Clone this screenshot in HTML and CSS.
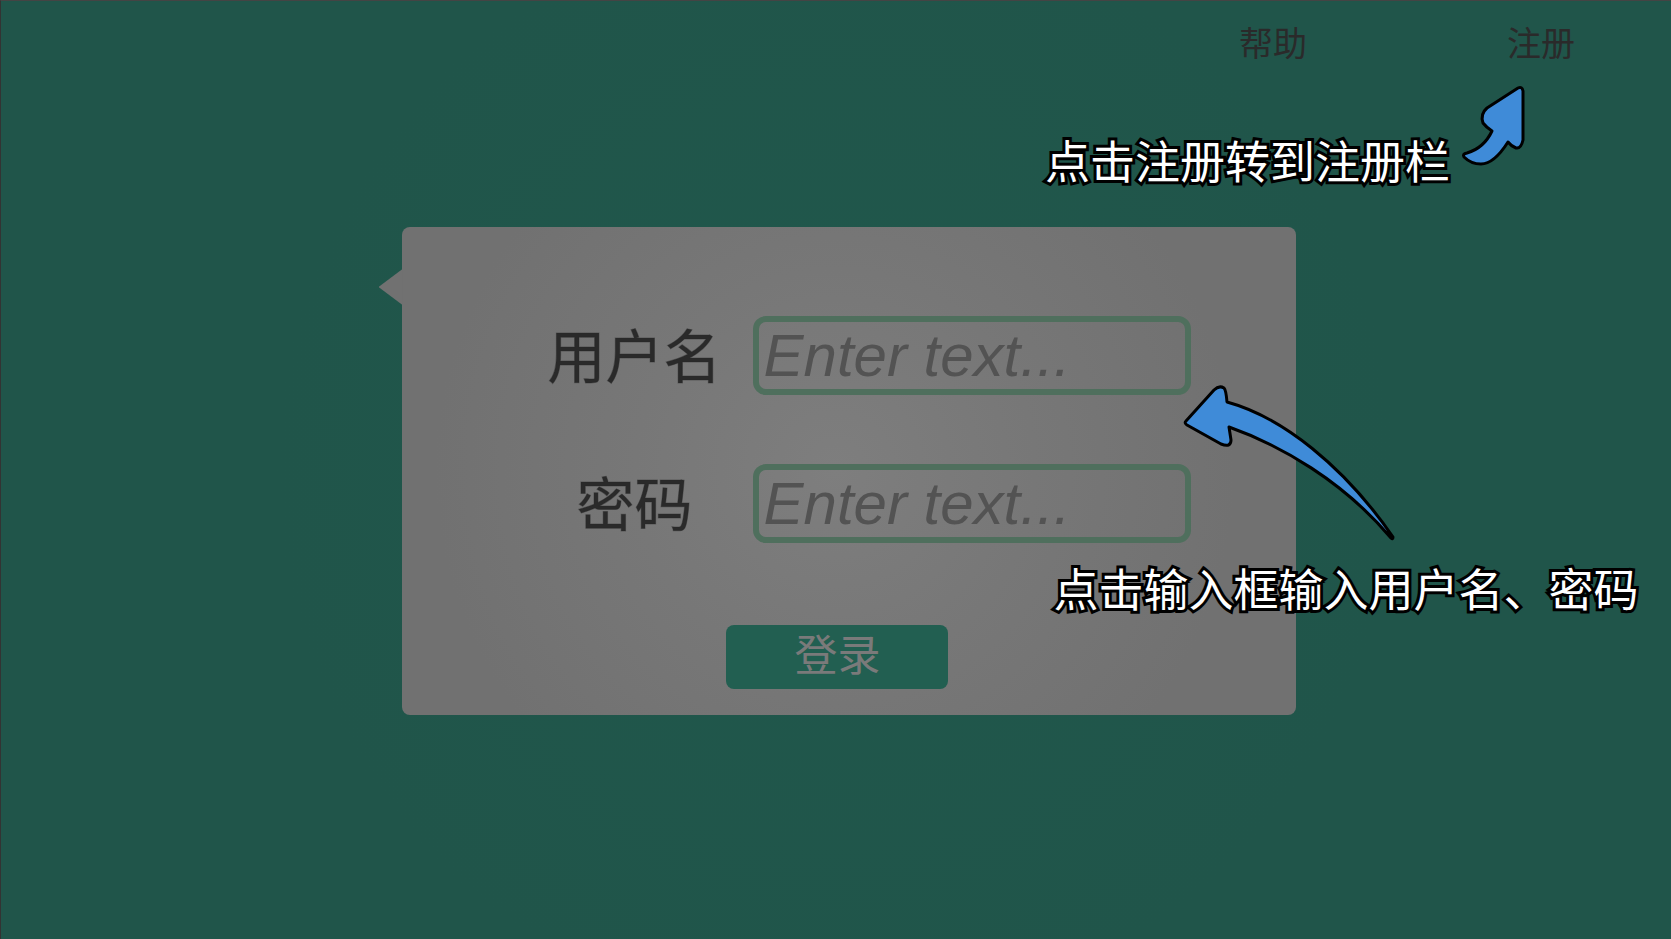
FILE: index.html
```html
<!DOCTYPE html>
<html lang="zh-CN">
<head>
<meta charset="utf-8">
<meta name="viewport" content="width=device-width, initial-scale=1">
<title>登录</title>
<link rel="stylesheet" href="styles.css">
</head>
<body>
<div class="page">
  <header class="topbar">
    <nav class="nav">
      <a class="nav-link" href="#help">帮助</a>
      <a class="nav-link" href="#register">注册</a>
    </nav>
    <div class="hint hint-register">
      <p class="hint-text">点击注册转到注册栏</p>
      <svg class="arrow-register" viewBox="0 0 64 84" width="64" height="84" aria-hidden="true">
        <path d="M2 71Q0 68 5 67Q22 62 30 45Q24 41 21 37Q18 28 25 22L56 2Q60 0 61 5V54Q59 63 54 62Q49 60 46 56Q32 78 19 78Q9 78 2 71Z"/>
      </svg>
    </div>
  </header>
  <main class="stage">
    <div class="panel">
      <form class="card">
        <div class="field">
          <label class="field-label" for="user">用户名</label>
          <input class="field-input" id="user" type="text" placeholder="Enter text...">
        </div>
        <div class="field">
          <label class="field-label" for="pass">密码</label>
          <input class="field-input" id="pass" type="password" placeholder="Enter text...">
        </div>
        <button class="submit" type="button">登录</button>
      </form>
      <div class="hint hint-input">
        <svg class="arrow-input" viewBox="0 0 216 160" width="216" height="160" aria-hidden="true">
          <path d="M3 37L31 6Q36 1 41 4Q43 6 44 18C99 33 161 82 210 153Q210 156 208 154C160 97 97 61 46 43L48 56Q48 64 38 60L4 41Q1 39 3 37Z"/>
        </svg>
        <p class="hint-text">点击输入框输入用户名、密码</p>
      </div>
    </div>
  </main>
</div>
</body>
</html>
```
FILE: styles.css
```css
* {
  box-sizing: border-box;
}

body {
  margin: 0;
  background: #20554a;
  font-family: "Noto Sans CJK SC", sans-serif;
  color: #2a2a2a;
}

.page {
  min-height: 100vh;
  border-top: 1px solid #444;
  border-left: 1px solid #333;
  background: radial-gradient(circle at 50% 50%, #20584c 0, #20554a 560px);
  overflow: hidden;
}

.topbar {
  position: relative;
  height: 226px;
  padding: 16px 96px 0;
}

.nav {
  display: flex;
  justify-content: flex-end;
  gap: 200px;
}

.nav-link {
  color: #2a2a2a;
  font-size: 34px;
  line-height: 50px;
  text-decoration: none;
}

.hint {
  position: absolute;
  z-index: 1;
  pointer-events: none;
}

.hint-text {
  margin: 0;
  color: #fff;
  font-size: 45px;
  line-height: 60px;
  white-space: nowrap;
  -webkit-text-stroke: 6px #000;
  paint-order: stroke fill;
}

.hint svg {
  display: block;
  overflow: visible;
  fill: #3f8bd8;
  stroke: #000;
  stroke-width: 3;
  stroke-linejoin: round;
}

.hint-register {
  top: 85px;
  right: 145px;
  display: flex;
  gap: 12px;
}

.hint-register .hint-text {
  margin-top: 44px;
}

.stage {
  display: flex;
  justify-content: center;
  padding: 0 0 40px 25px;
}

.panel {
  position: relative;
  width: 894px;
}

.panel::before {
  content: "";
  position: absolute;
  top: 42px;
  left: -23px;
  width: 24px;
  height: 36px;
  background: #717171;
  clip-path: polygon(100% 0, 0 50%, 100% 100%);
}

.card {
  display: flex;
  flex-direction: column;
  padding: 89px 105px 26px 132px;
  border-radius: 8px;
  background: radial-gradient(circle at 433px 243px, #7e7e7e 0, #777 200px, #717171 400px);
}

.field {
  display: flex;
  align-items: flex-start;
  justify-content: space-between;
  margin-bottom: 69px;
}

.field-label {
  width: 202px;
  font-size: 58px;
  line-height: 74px;
  text-align: center;
  white-space: nowrap;
  -webkit-text-stroke: 1px #2a2a2a66;
}

.field-input {
  width: 438px;
  height: 79px;
  padding: 0 5px;
  border: 6px solid #4f6f5d;
  border-radius: 13px;
  outline: 0;
  background: transparent;
  color: #2a2a2a;
  font: 60px "Liberation Sans", Arial, sans-serif;
}

.field-input::placeholder {
  color: #535353;
  font-style: italic;
  opacity: 1;
}

.submit {
  width: 222px;
  height: 64px;
  margin: 13px 0 0 192px;
  padding: 0 0 10px 2px;
  border: 0;
  border-radius: 8px;
  background: #225f51;
  color: #7a7a7a;
  font: 43px/54px "Noto Sans CJK SC", sans-serif;
}

.hint-input {
  top: 157px;
  left: 652px;
}

.hint-input .arrow-input {
  margin-left: 129px;
}

.hint-input .hint-text {
  margin-top: 14px;
}
```
